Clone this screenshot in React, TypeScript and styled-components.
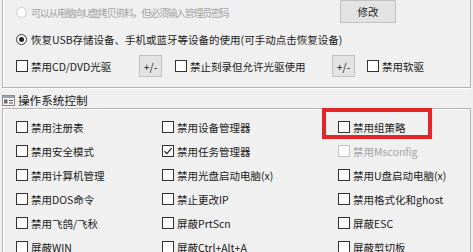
import React from "react";
import styled, { createGlobalStyle, css } from "styled-components";

const Global = createGlobalStyle`
  html, body { margin: 0; padding: 0; background: #f0f0f0; overflow: hidden; }
  body { font-family: "Noto Sans CJK SC", "Noto Sans", sans-serif; font-size: 10.5px; color: #1a1a1a; }
`;

const Page = styled.div`
  width: 473px;
  height: 252px;
  overflow: hidden;
  display: flex;
  flex-direction: column;
`;

const GroupBox = styled.div`
  margin: 0 2px;
  border: 1px solid #b4b4b4;
  box-shadow: inset 1px 1px 0 #fff, 0 1px 0 #fff;
`;

const TopGroup = styled(GroupBox)`
  margin-top: -12px;
  padding: 11px 0 9px 13px;
  display: flex;
  flex-direction: column;
  gap: 3px;
`;

const Row = styled.div`
  height: 24px;
  display: flex;
  align-items: center;
`;

const FirstRow = styled(Row)`
  display: grid;
  grid-template-columns: 324px 56px;
  align-items: center;
`;

const Option = styled.label<{ $disabled?: boolean; $width?: number; $tight?: boolean }>`
  display: flex;
  align-items: center;
  gap: 3px;
  white-space: nowrap;
  color: ${(p) => (p.$disabled ? "#a3a3a3" : "#1a1a1a")};
  ${(p) => p.$width && css`width: ${p.$width}px; flex: none;`}
  ${(p) => p.$tight && css`font-size: 10px; letter-spacing: -1.3px;`}
`;

const RadioDot = styled.span<{ $checked?: boolean; $disabled?: boolean }>`
  width: 11px;
  height: 11px;
  border-radius: 50%;
  box-sizing: border-box;
  border: 1px solid ${(p) => (p.$disabled ? "#cfcfcf" : "#333")};
  background: #fff;
  display: flex;
  align-items: center;
  justify-content: center;
  flex: none;
  margin-right: 1px;
  &::after {
    content: "";
    display: ${(p) => (p.$checked ? "block" : "none")};
    width: 5px;
    height: 5px;
    border-radius: 50%;
    background: #222;
  }
`;

const Box = styled.span<{ $disabled?: boolean }>`
  width: 12px;
  height: 12px;
  box-sizing: border-box;
  border: 1px solid ${(p) => (p.$disabled ? "#c4c4c4" : "#333")};
  background: #fff;
  display: flex;
  align-items: center;
  justify-content: center;
  flex: none;
`;

const Button = styled.button<{ $w: number; $h: number }>`
  width: ${(p) => p.$w}px;
  height: ${(p) => p.$h}px;
  flex: none;
  padding: 0;
  margin: 0;
  box-sizing: border-box;
  border: 1px solid #c2c2c2;
  background: #e3e3e3;
  color: #222;
  font-family: "Noto Sans CJK SC", "Noto Sans", sans-serif;
  font-size: 10.5px;
  display: flex;
  align-items: center;
  justify-content: center;
`;

const ModifyButton = styled(Button)`
  margin-top: -2px;
`;

const Spacer = styled.span<{ $w: number }>`
  width: ${(p) => p.$w}px;
  flex: none;
`;

const Header = styled.div`
  height: 21px;
  box-sizing: border-box;
  padding: 4px 0 0 2px;
  display: flex;
  align-items: center;
  gap: 3px;
  font-size: 11.6px;
  color: #1a1a1a;
`;

const ControlGroup = styled(GroupBox)`
  position: relative;
  flex: 1;
  padding: 6px 0 0 13px;
  display: grid;
  grid-template-columns: 146px 176px 1fr;
  grid-auto-rows: 24px;
  align-items: center;
  border-bottom: none;
`;

const Highlight = styled.div`
  position: absolute;
  left: 319px;
  top: -1px;
  width: 110px;
  height: 31px;
  box-sizing: border-box;
  border: 4px solid #e4262c;
  pointer-events: none;
`;

const Check = () => (
  <svg width="10" height="10" viewBox="0 0 10 10">
    <path d="M1.5 5.2 L4 7.6 L8.6 2.2" fill="none" stroke="#222" strokeWidth="1.2" />
  </svg>
);

const FormIcon = () => (
  <svg width="13" height="11" viewBox="0 0 13 11">
    <rect x="0.5" y="0.5" width="12" height="10" fill="#f4f4f4" stroke="#8a8a8a" />
    <rect x="1" y="1" width="11" height="2" fill="#9aa3ad" />
    <rect x="2" y="4.5" width="3.5" height="4" fill="#6d6d6d" />
    <rect x="7" y="5" width="4" height="1" fill="#555" />
    <rect x="7" y="7.5" width="4" height="1" fill="#555" />
  </svg>
);

type Item = { label: string; checked?: boolean; disabled?: boolean };

const items: Item[] = [
  { label: "禁用注册表" },
  { label: "禁用设备管理器" },
  { label: "禁用组策略" },
  { label: "禁用安全模式" },
  { label: "禁用任务管理器", checked: true },
  { label: "禁用Msconfig", disabled: true },
  { label: "禁用计算机管理" },
  { label: "禁用光盘启动电脑(x)" },
  { label: "禁用U盘启动电脑(x)" },
  { label: "禁用DOS命令" },
  { label: "禁止更改IP" },
  { label: "禁用格式化和ghost" },
  { label: "禁用飞鸽/飞秋" },
  { label: "屏蔽PrtScn" },
  { label: "屏蔽ESC" },
  { label: "屏蔽WIN" },
  { label: "屏蔽Ctrl+Alt+A" },
  { label: "屏蔽剪切板" },
];

const CheckItem = ({ label, checked, disabled, width }: Item & { width?: number }) => (
  <Option $disabled={disabled} $width={width}>
    <Box $disabled={disabled}>{checked && <Check />}</Box>
    {label}
  </Option>
);

export default function App() {
  return (
    <Page>
      <Global />
      <TopGroup>
        <FirstRow>
          <Option $disabled $tight>
            <RadioDot $disabled />
            可以从电脑向U盘拷贝资料，但必须输入管理员密码
          </Option>
          <ModifyButton $w={56} $h={23}>修改</ModifyButton>
        </FirstRow>
        <Row>
          <Option>
            <RadioDot $checked />
            恢复USB存储设备、手机或蓝牙等设备的使用(可手动点击恢复设备)
          </Option>
        </Row>
        <Row>
          <CheckItem label="禁用CD/DVD光驱" width={123} />
          <Button $w={23} $h={22}>+/-</Button>
          <Spacer $w={13} />
          <CheckItem label="禁止刻录但允许光驱使用" width={157} />
          <Button $w={23} $h={22}>+/-</Button>
          <Spacer $w={12} />
          <CheckItem label="禁用软驱" />
        </Row>
      </TopGroup>
      <Header>
        <FormIcon />
        操作系统控制
      </Header>
      <ControlGroup>
        {items.map((it) => (
          <CheckItem key={it.label} {...it} />
        ))}
        <Highlight />
      </ControlGroup>
    </Page>
  );
}
